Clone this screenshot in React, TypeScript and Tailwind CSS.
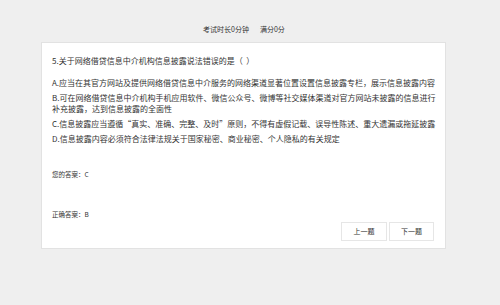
export default function App() {
  const options = [
    ['A.应当在其官方网站及提供网络借贷信息中介服务的网络渠道显著位置设置信息披露专栏，展示信息披露内容'],
    ['B.可在网络借贷信息中介机构手机应用软件、微信公众号、微博等社交媒体渠道对官方网站未披露的信息进行', '补充披露，达到信息披露的全面性'],
    ['C.信息披露应当遵循“真实、准确、完整、及时”原则，不得有虚假记载、误导性陈述、重大遗漏或拖延披露'],
    ['D.信息披露内容必须符合法律法规关于国家秘密、商业秘密、个人隐私的有关规定'],
  ];

  return (
    <div
      className="h-[305px] w-full bg-[#efefef] text-[#333]"
      style={{ fontFamily: '"Noto Sans CJK SC", "Liberation Sans", sans-serif' }}
    >
      <div className="ml-[41px] w-[405px]">
        {/* Exam info */}
        <div className="flex gap-[11px] pl-[162px] pt-[24px] text-[7px] leading-[10px]">
          <span>考试时长0分钟</span>
          <span>满分0分</span>
        </div>

        {/* Question card */}
        <div className="mt-[8px] border border-[#e2e2e2] bg-white px-[10px] pb-[7px] pt-[12px]">
          <p className="text-[8px] leading-[11px]">5.关于网络借贷信息中介机构信息披露说法错误的是（&nbsp;&nbsp;）</p>

          <div className="mt-[11px] flex flex-col gap-[4px]">
            {options.map((lines) => (
              <p key={lines[0]} className="whitespace-nowrap text-[8px] leading-[11px]">
                {lines.map((line) => (
                  <span key={line} className="block">
                    {line}
                  </span>
                ))}
              </p>
            ))}
          </div>

          <p className="mt-[25px] text-[6.5px] leading-[10px]">您的答案：C</p>
          <p className="mt-[30px] text-[6.5px] leading-[10px]">正确答案：B</p>

          <div className="mt-[3px] flex justify-end gap-[2px] pr-[1px]">
            <button className="h-[19px] w-[46px] border border-[#e6e6e6] bg-white text-[7px] text-[#333]">
              上一题
            </button>
            <button className="h-[19px] w-[45px] border border-[#e6e6e6] bg-white text-[7px] text-[#333]">
              下一题
            </button>
          </div>
        </div>
      </div>
    </div>
  );
}
